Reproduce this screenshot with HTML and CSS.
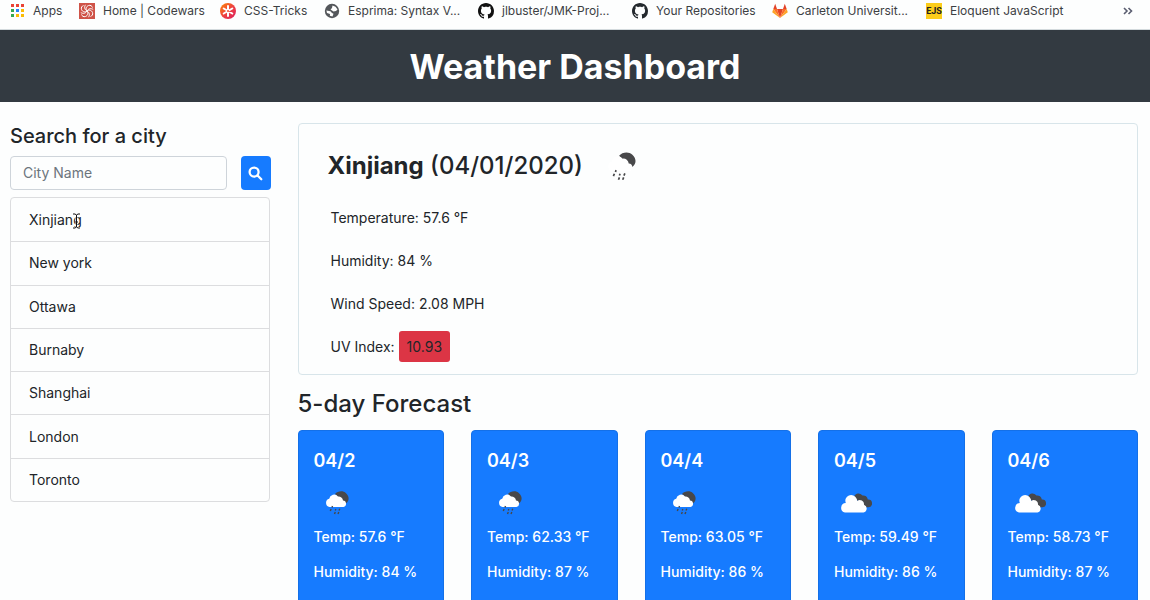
FILE: index.html
```html
<!DOCTYPE html>
<html lang="en">
<head>
<meta charset="utf-8">
<meta name="viewport" content="width=device-width, initial-scale=1">
<title>Weather Dashboard</title>
<link rel="stylesheet" href="styles.css">
</head>
<body>
<svg class="defs" aria-hidden="true">
  <symbol id="rain-cloud" viewBox="0 0 24 24">
    <path class="dark" d="M10 3C12.500 0 18 -.8 21 2.200C24.500 5.200 24.500 10 20.800 12.500L17 10Z"/>
    <path class="white" d="M4.500 16a4.200 4.200 0 0 1-.3-8.200A5 5 0 0 1 13 5.500 4.500 4.500 0 0 1 18 9.500 3.300 3.300 0 0 1 18.500 16Z"/>
    <path class="drops" d="M7 16.500l.5-1.500M5.300 20l.8-2M9.500 23l.8-2M10.300 19.500l.5-1.500M13 23l.8-2M14 19.500l.8-1.800"/>
  </symbol>
  <symbol id="broken-clouds" viewBox="0 0 32 20">
    <path class="dark" d="M14 3.500A5 5 0 0 1 22.500 2.500 4.500 4.500 0 0 1 27.800 6.500 3.800 3.800 0 0 1 28.500 14.300H23Z"/>
    <path class="white" d="M5 19.500a4.800 4.800 0 0 1 .8-9.500A5.800 5.800 0 0 1 16.500 5.500a5 5 0 0 1 .7 2.500 4.200 4.200 0 0 1 6.800 3.800A4 4 0 0 1 23.500 19.500Z"/>
  </symbol>
  <symbol id="octocat" viewBox="0 0 16 16">
    <path d="M8 0C3.580 0 0 3.580 0 8c0 3.540 2.290 6.530 5.470 7.590.4.070.55-.17.55-.38 0-.19-.01-.82-.01-1.490-2.010.37-2.530-.49-2.690-.94-.09-.23-.48-.94-.82-1.130-.28-.15-.68-.52-.01-.53.63-.01 1.080.58 1.230.82.72 1.210 1.870.87 2.330.66.07-.52.28-.87.51-1.070-1.780-.2-3.640-.89-3.640-3.950 0-.87.31-1.590.82-2.150-.08-.2-.36-1.020.08-2.120 0 0 .67-.21 2.200.82.64-.18 1.320-.27 2-.27s1.360.09 2 .27c1.530-1.040 2.200-.82 2.200-.82.44 1.100.16 1.920.08 2.120.51.56.82 1.270.82 2.150 0 3.070-1.870 3.750-3.650 3.950.29.25.54.73.54 1.480 0 1.070-.01 1.930-.01 2.200 0 .21.15.46.55.38A8.010 8.010 0 0 0 16 8c0-4.420-3.580-8-8-8Z"/>
  </symbol>
</svg>

<nav class="bookmarks" aria-label="Bookmarks">
  <a class="bookmark" href="#">
    <svg class="favicon" viewBox="0 0 16 16"><path fill="#ea4335" d="M2 1h3v3H2zM7 1h3v3H7zM12 1h3v3h-3z"/><path fill="#34a853" d="M2 6h3v3H2zM2 11h3v3H2z"/><path fill="#2684fc" d="M7 6h3v3H7z"/><path fill="#fbbc04" d="M12 6h3v3h-3zM7 11h3v3H7zM12 11h3v3h-3z"/></svg>
    <span>Apps</span></a>
  <a class="bookmark" href="#">
    <svg class="favicon" viewBox="0 0 16 16"><path fill="#cf5348" d="M0 0h16v16H0z"/><g fill="none" stroke="#fff" stroke-width="1"><path d="M8 8C6.500 6 7 3.500 9.500 2.500M8 8C5.500 6.500 5 4 6.500 1.800M9.500 2.500C11.500 1.800 13 3 13.500 4.500"/><path d="M8 8C6.500 6 7 3.500 9.500 2.500M8 8C5.500 6.500 5 4 6.500 1.800M9.500 2.500C11.500 1.800 13 3 13.500 4.500" transform="rotate(90 8 8)"/><path d="M8 8C6.500 6 7 3.500 9.500 2.500M8 8C5.500 6.500 5 4 6.500 1.800M9.500 2.500C11.500 1.800 13 3 13.500 4.500" transform="rotate(180 8 8)"/><path d="M8 8C6.500 6 7 3.500 9.500 2.500M8 8C5.500 6.500 5 4 6.500 1.800M9.500 2.500C11.500 1.800 13 3 13.500 4.500" transform="rotate(270 8 8)"/></g></svg>
    <span>Home | Codewars</span></a>
  <a class="bookmark" href="#">
    <svg class="favicon" viewBox="0 0 16 16"><defs><linearGradient id="tricks" x1="0" y1="0" x2="1" y2="1"><stop offset="0" stop-color="#ff8a00"/><stop offset=".5" stop-color="#ee4340"/><stop offset="1" stop-color="#da1b60"/></linearGradient></defs><circle cx="8" cy="8" r="8" fill="url(#tricks)"/><path d="M8 3v10M3.700 5.500l8.600 5M12.300 5.500l-8.600 5" stroke="#fff" stroke-width="2" stroke-linecap="round"/><circle cx="8" cy="8" r="1" fill="#ee5335"/></svg>
    <span>CSS-Tricks</span></a>
  <a class="bookmark" href="#">
    <svg class="favicon" viewBox="0 0 16 16"><circle cx="8" cy="8" r="7.200" fill="#54575b"/><path fill="#fff" d="M8.500 2.600l3 1.200 2 2.700-1.500 1.500-2.500.5L8 7.500 6.500 6.500 8 5zM2.400 7.500l4 .8L8 10l1.500.8L8.500 13.500 5.800 12.800 6 11 3 10z"/></svg>
    <span>Esprima: Syntax V...</span></a>
  <a class="bookmark" href="#"><svg class="favicon octocat-black"><use href="#octocat"/></svg><span>jlbuster/JMK-Proj...</span></a>
  <a class="bookmark" href="#"><svg class="favicon octocat-ink"><use href="#octocat"/></svg><span>Your Repositories</span></a>
  <a class="bookmark" href="#">
    <svg class="favicon" viewBox="0 0 16 16"><path fill="#e24329" d="M8 15L5 6h6zM3.200 .8L1.300 6H5zM12.800 .8L14.700 6H11z"/><path fill="#fc6d26" d="M8 15L1.300 6H5zM8 15l6.700-9H11z"/><path fill="#fca326" d="M1.300 6L.2 9.200 8 15zM14.700 6l1.100 3.200L8 15z"/></svg>
    <span>Carleton Universit...</span></a>
  <a class="bookmark" href="#"><span class="ejs-icon">EJS</span><span>Eloquent JavaScript</span></a>
  <button class="more" type="button" aria-label="More bookmarks"><svg width="10" height="8" viewBox="0 0 10 8"><path d="M1 1l3 3-3 3M5.500 1l3 3-3 3"/></svg></button>
</nav>

<header class="banner"><h1>Weather Dashboard</h1></header>

<main class="layout">
  <aside class="sidebar">
    <form class="search">
      <label class="search-label" for="city">Search for a city</label>
      <div class="search-row">
        <input id="city" class="search-input" type="text" placeholder="City Name">
        <button class="search-button" type="button" aria-label="Search"><svg viewBox="0 0 16 16"><circle cx="6.500" cy="6.500" r="4.800"/><path d="M10.200 10.200l4 4"/></svg></button>
      </div>
    </form>
    <ul class="cities">
      <li class="hovered">Xinjiang<svg class="cursor" viewBox="0 0 9 16"><path class="halo" d="M1 1h2l1.500 1L6 1h2M4.500 2v12M1 15h2l1.500-1L6 15h2M3 9h3"/><path d="M1 1h2l1.500 1L6 1h2M4.500 2v12M1 15h2l1.500-1L6 15h2M3 9h3"/></svg></li>
      <li>New york</li>
      <li>Ottawa</li>
      <li>Burnaby</li>
      <li>Shanghai</li>
      <li>London</li>
      <li>Toronto</li>
    </ul>
  </aside>

  <section class="content">
    <article class="current">
      <div class="current-head">
        <h2><strong>Xinjiang</strong> (04/01/2020)</h2>
        <svg class="current-icon"><use href="#rain-cloud"/></svg>
      </div>
      <p>Temperature: 57.6 °F</p>
      <p>Humidity: 84 %</p>
      <p>Wind Speed: 2.08 MPH</p>
      <p>UV Index: <span class="uv">10.93</span></p>
    </article>

    <h2 class="forecast-title">5-day Forecast</h2>
    <div class="forecast">
      <article class="day"><h3>04/2</h3><svg class="rain"><use href="#rain-cloud"/></svg><p>Temp: 57.6 °F</p><p>Humidity: 84 %</p></article>
      <article class="day"><h3>04/3</h3><svg class="rain"><use href="#rain-cloud"/></svg><p>Temp: 62.33 °F</p><p>Humidity: 87 %</p></article>
      <article class="day"><h3>04/4</h3><svg class="rain"><use href="#rain-cloud"/></svg><p>Temp: 63.05 °F</p><p>Humidity: 86 %</p></article>
      <article class="day"><h3>04/5</h3><svg class="clouds"><use href="#broken-clouds"/></svg><p>Temp: 59.49 °F</p><p>Humidity: 86 %</p></article>
      <article class="day"><h3>04/6</h3><svg class="clouds"><use href="#broken-clouds"/></svg><p>Temp: 58.73 °F</p><p>Humidity: 87 %</p></article>
    </div>
  </section>
</main>
</body>
</html>
```
FILE: styles.css
```css
* { box-sizing: border-box; }

body {
  margin: 0;
  height: 100vh;
  overflow: hidden;
  background: #fdfefe;
  color: #212529;
  font-family: Inter, "Liberation Sans", sans-serif;
  font-size: 14px;
  line-height: 22px;
}

h1, h2, h3, p, ul { margin: 0; padding: 0; }
svg { display: block; }

.defs { position: absolute; width: 0; height: 0; }
.dark { fill: #48484a; }
.white { fill: #fff; }
.drops { fill: none; stroke: #48484a; stroke-width: 1.4; }

/* Bookmarks */
.bookmarks {
  display: grid;
  grid-template-columns: 70px 141px 104px 154px 154px 140px 154px 1fr auto;
  align-items: center;
  height: 30px;
  padding: 0 17px 7px 9px;
  border-bottom: 1px solid #d3dadd;
  font-size: 12px;
}
.bookmark {
  display: flex;
  align-items: center;
  gap: 8px;
  color: #3c4043;
  text-decoration: none;
  white-space: nowrap;
}
.favicon { width: 16px; height: 16px; flex: none; }
.octocat-black { fill: #111; }
.octocat-ink { fill: #24292e; }
.ejs-icon {
  display: flex;
  justify-content: center;
  width: 16px;
  height: 16px;
  background: #fccd1b;
  color: #222;
  font: 700 9px/16px Roboto, "Liberation Sans", sans-serif;
}
.more { padding: 0; border: 0; background: none; }
.more path { fill: none; stroke: #5a5d70; stroke-width: 1.6; }

/* Banner */
.banner {
  padding: 15px 0 13px;
  background: #333a41;
  color: #fff;
  text-align: center;
}
.banner h1 { font-size: 34px; line-height: 44px; font-weight: 700; }

/* Layout */
.layout { display: grid; grid-template-columns: 1fr 3fr; padding-top: 21px; }
.sidebar { padding: 0 17px 0 10px; min-width: 0; }
.content { padding: 0 12px 0 10px; min-width: 0; }

/* Search */
.search-label { display: block; font-size: 20px; line-height: 26px; font-weight: 500; }
.search-row { display: flex; gap: 14px; margin-top: 7px; }
.search-input {
  flex: 1;
  min-width: 0;
  height: 34px;
  padding: 0 12px 1px;
  border: 1px solid #ced4da;
  border-radius: 4px;
  background: #fdfefe;
  color: #495057;
  font: inherit;
}
.search-input::placeholder { color: #6c757d; opacity: 1; }
.search-button {
  display: flex;
  align-items: center;
  justify-content: center;
  width: 30px;
  height: 34px;
  padding: 0;
  border: 0;
  border-radius: 4px;
  background: #167bff;
}
.search-button svg { width: 15px; height: 15px; fill: none; stroke: #fff; stroke-width: 2.4; stroke-linecap: round; }

/* City history */
.cities {
  display: grid;
  grid-auto-rows: 1fr;
  min-height: 305px;
  margin: 7px 1px 0 0;
  border: 1px solid #dcdddf;
  border-radius: 4px;
  list-style: none;
}
.cities li { display: flex; align-items: center; padding: 0 18px; }
.cities li + li { border-top: 1px solid #dcdddf; }
.cities .hovered { position: relative; }
.cursor { position: absolute; left: 61px; top: 15px; width: 9px; height: 16px; fill: none; stroke: #111; stroke-width: 1; }
.cursor .halo { stroke: #fff; stroke-width: 2; }

/* Current weather */
.current { padding: 19px 29px 6px; border: 1px solid #d8e5ea; border-radius: 4px; }
.current-head { display: flex; align-items: center; gap: 24px; margin-bottom: 8px; }
.current-head h2 { font-size: 24px; line-height: 46px; font-weight: 500; }
.current-icon { width: 29px; height: 29px; }
.current p { margin-top: 1px; padding: 10px 3px; }
.uv { display: inline-block; margin: -5px 0; padding: 5px 8px; line-height: 21px; border-radius: 3px; background: #dc3545; }

/* Forecast */
.forecast-title { margin-top: 13px; font-size: 24px; line-height: 32px; font-weight: 500; }
.forecast { display: grid; grid-template-columns: repeat(5, 1fr); gap: 27px; margin-top: 10px; }
.day { padding: 18px 15px 28px; border: 1px solid #1470e8; border-radius: 4px; background: #167bff; color: #fff; font-weight: 500; }
.day h3 { font-size: 18px; line-height: 24px; font-weight: 600; }
.day svg { margin: 18px 0 11px 11px; width: 24px; height: 24px; }
.day .clouds { margin-left: 6px; width: 32px; }
.day p { margin-bottom: 13px; }
```
